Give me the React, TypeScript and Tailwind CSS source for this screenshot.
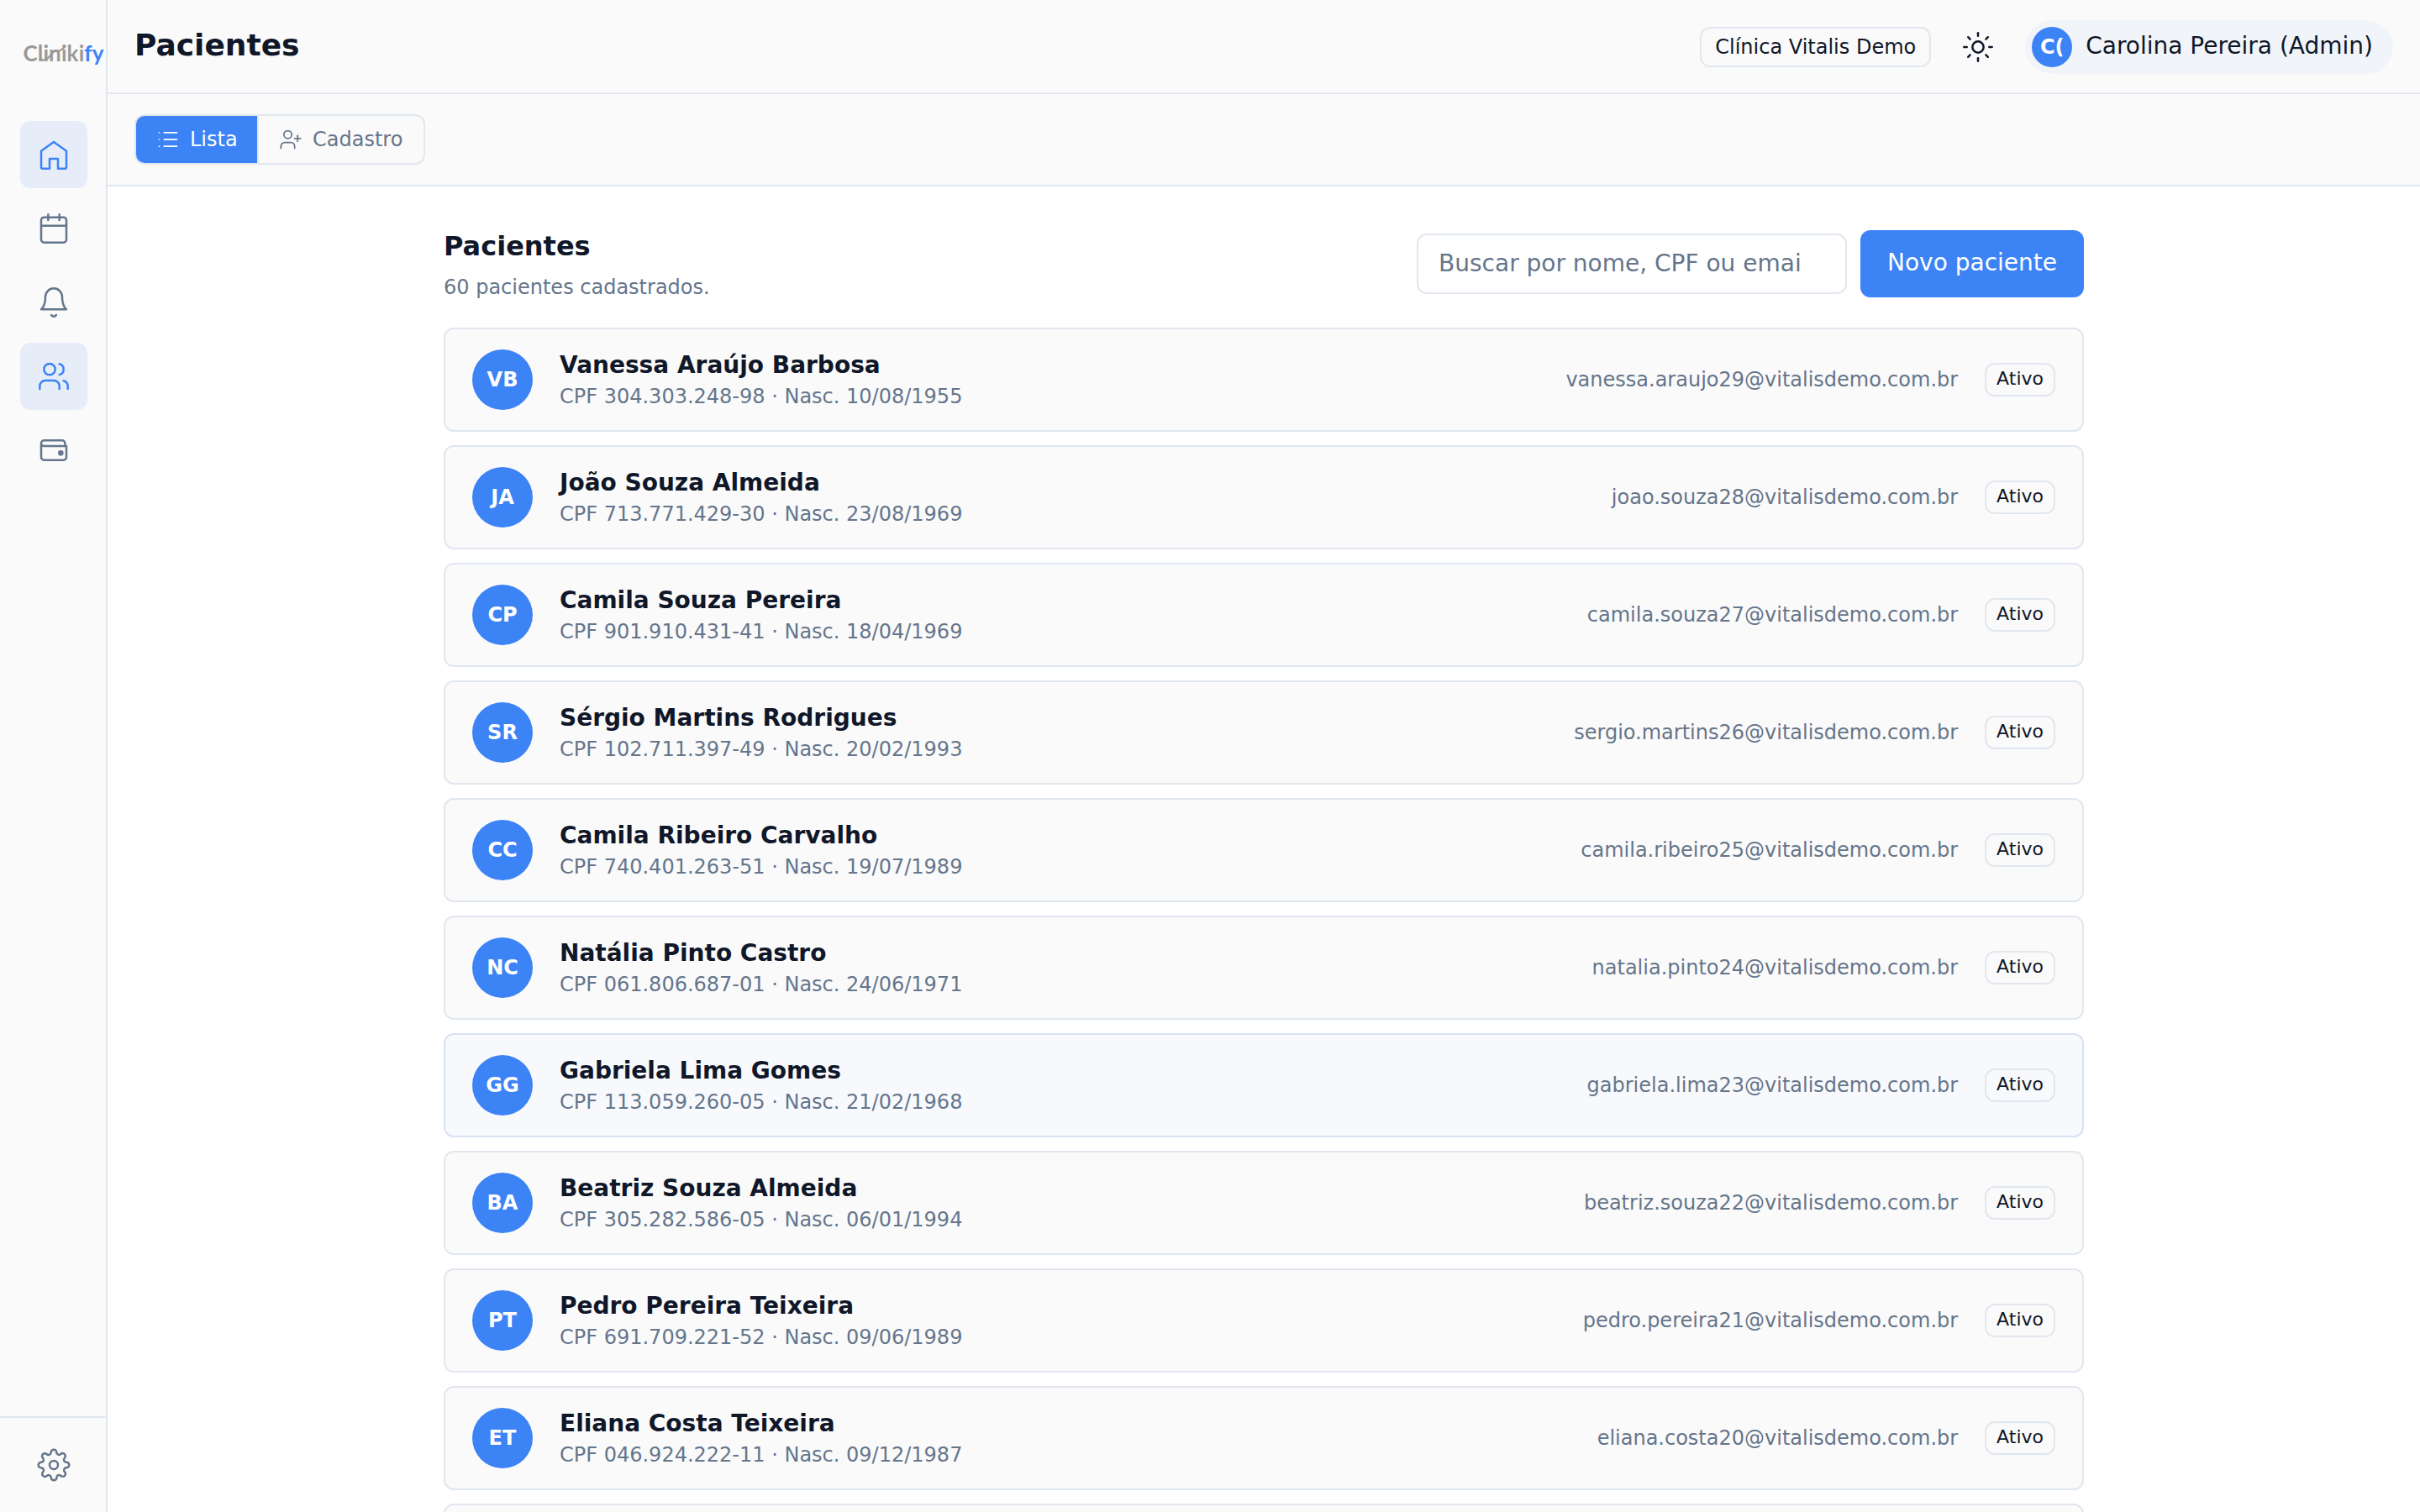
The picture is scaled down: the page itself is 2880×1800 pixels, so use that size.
import type { ReactNode } from "react";
import { List, Sun, UserPlus, Users } from "lucide-react";
import clsx from "clsx";

type Patient = {
  initials: string;
  name: string;
  cpf: string;
  birth: string;
  email: string;
};

const PATIENTS: Patient[] = [
  { initials: "VB", name: "Vanessa Araújo Barbosa", cpf: "304.303.248-98", birth: "10/08/1955", email: "vanessa.araujo29@vitalisdemo.com.br" },
  { initials: "JA", name: "João Souza Almeida", cpf: "713.771.429-30", birth: "23/08/1969", email: "joao.souza28@vitalisdemo.com.br" },
  { initials: "CP", name: "Camila Souza Pereira", cpf: "901.910.431-41", birth: "18/04/1969", email: "camila.souza27@vitalisdemo.com.br" },
  { initials: "SR", name: "Sérgio Martins Rodrigues", cpf: "102.711.397-49", birth: "20/02/1993", email: "sergio.martins26@vitalisdemo.com.br" },
  { initials: "CC", name: "Camila Ribeiro Carvalho", cpf: "740.401.263-51", birth: "19/07/1989", email: "camila.ribeiro25@vitalisdemo.com.br" },
  { initials: "NC", name: "Natália Pinto Castro", cpf: "061.806.687-01", birth: "24/06/1971", email: "natalia.pinto24@vitalisdemo.com.br" },
  { initials: "GG", name: "Gabriela Lima Gomes", cpf: "113.059.260-05", birth: "21/02/1968", email: "gabriela.lima23@vitalisdemo.com.br" },
  { initials: "BA", name: "Beatriz Souza Almeida", cpf: "305.282.586-05", birth: "06/01/1994", email: "beatriz.souza22@vitalisdemo.com.br" },
  { initials: "PT", name: "Pedro Pereira Teixeira", cpf: "691.709.221-52", birth: "09/06/1989", email: "pedro.pereira21@vitalisdemo.com.br" },
  { initials: "ET", name: "Eliana Costa Teixeira", cpf: "046.924.222-11", birth: "09/12/1987", email: "eliana.costa20@vitalisdemo.com.br" },
];

const HIGHLIGHTED = "GG";

function Icon({ children }: { children: ReactNode }) {
  return (
    <svg
      viewBox="0 0 24 24"
      className="size-10"
      fill="none"
      stroke="currentColor"
      strokeWidth={1.5}
      strokeLinecap="round"
      strokeLinejoin="round"
    >
      {children}
    </svg>
  );
}

const HomeIcon = () => (
  <Icon>
    <path d="M3 9.5 12 3l9 6.5V21a1 1 0 0 1-1 1h-5v-7H9v7H4a1 1 0 0 1-1-1z" />
  </Icon>
);

const CalendarIcon = () => (
  <Icon>
    <rect x="3" y="4" width="18" height="18" rx="2" />
    <path d="M16 2v4M8 2v4M3 10h18" />
  </Icon>
);

const BellIcon = () => (
  <Icon>
    <path d="M18 8A6 6 0 0 0 6 8c0 7-3 9-3 9h18s-3-2-3-9" />
    <path d="M13.73 21a2 2 0 0 1-3.46 0" />
  </Icon>
);

const WalletIcon = () => (
  <Icon>
    <path d="M3 7v10a2 2 0 0 0 2 2h14a2 2 0 0 0 2-2V9H5a2 2 0 0 1 0-4h13a2 2 0 0 1 2 2v2" />
    <circle cx="17" cy="14" r="1.25" fill="currentColor" />
  </Icon>
);

const SettingsIcon = () => (
  <Icon>
    <circle cx="12" cy="12" r="3" />
    <path d="M19.4 15a1.65 1.65 0 0 0 .33 1.82l.06.06a2 2 0 0 1 0 2.83 2 2 0 0 1-2.83 0l-.06-.06a1.65 1.65 0 0 0-1.82-.33 1.65 1.65 0 0 0-1 1.51V21a2 2 0 0 1-2 2 2 2 0 0 1-2-2v-.09A1.65 1.65 0 0 0 9 19.4a1.65 1.65 0 0 0-1.82.33l-.06.06a2 2 0 0 1-2.83 0 2 2 0 0 1 0-2.83l.06-.06a1.65 1.65 0 0 0 .33-1.82 1.65 1.65 0 0 0-1.51-1H3a2 2 0 0 1-2-2 2 2 0 0 1 2-2h.09A1.65 1.65 0 0 0 4.6 9a1.65 1.65 0 0 0-.33-1.82l-.06-.06a2 2 0 0 1 0-2.83 2 2 0 0 1 2.83 0l.06.06a1.65 1.65 0 0 0 1.82.33H9a1.65 1.65 0 0 0 1-1.51V3a2 2 0 0 1 2-2 2 2 0 0 1 2 2v.09a1.65 1.65 0 0 0 1 1.51 1.65 1.65 0 0 0 1.82-.33l.06-.06a2 2 0 0 1 2.83 0 2 2 0 0 1 0 2.83l-.06.06a1.65 1.65 0 0 0-.33 1.82V9a1.65 1.65 0 0 0 1.51 1H21a2 2 0 0 1 2 2 2 2 0 0 1-2 2h-.09a1.65 1.65 0 0 0-1.51 1z" />
  </Icon>
);

const NAV = [
  { id: "home", icon: <HomeIcon />, active: true },
  { id: "agenda", icon: <CalendarIcon />, active: false },
  { id: "alerts", icon: <BellIcon />, active: false },
  { id: "patients", icon: <Users size={40} strokeWidth={1.5} />, active: true },
  { id: "finance", icon: <WalletIcon />, active: false },
];

function Logo() {
  return (
    <svg viewBox="0 0 98 36" className="h-9 w-[98px] shrink-0">
      <text
        x="-0.5"
        y="24.5"
        fontSize="26"
        fontWeight="700"
        textLength="96"
        className="font-['Lato',sans-serif]"
      >
        <tspan fill="#999998">Cliniki</tspan>
        <tspan fill="#3c83f6">fy</tspan>
      </text>
      {/* pulse line running through the middle letters */}
      <path
        d="M20 19c0 5 4 6 8 3s7-10 12-9.500c4 .5 6-1.500 9.500-5.500"
        fill="none"
        stroke="#999998"
        strokeWidth="2.2"
        strokeLinecap="round"
      />
    </svg>
  );
}

function Sidebar() {
  return (
    <aside className="flex w-32 shrink-0 flex-col border-r-2 border-[#e1e7ef] bg-[#fafafa]">
      <div className="flex h-36 shrink-0 items-start pt-12 pl-7">
        <Logo />
      </div>
      <nav className="flex flex-1 flex-col gap-2 pl-6">
        {NAV.map(({ id, icon, active }) => (
          <button
            key={id}
            className={clsx(
              "flex size-20 items-center justify-center rounded-xl",
              active ? "bg-[#e6edf9] text-[#3c83f6]" : "text-[#65758b]"
            )}
          >
            {icon}
          </button>
        ))}
      </nav>
      <div className="border-t-2 border-[#e1e7ef] py-4 pl-6">
        <button className="flex size-20 items-center justify-center text-[#65758b]">
          <SettingsIcon />
        </button>
      </div>
    </aside>
  );
}

function Header() {
  return (
    <header className="flex h-28 shrink-0 items-center justify-between border-b-2 border-[#e1e7ef] bg-[#fafafa] px-8">
      <h1 className="pb-0.5 text-[36px] leading-[48px] font-bold">Pacientes</h1>
      <div className="flex items-center pt-0.5">
        <span className="flex h-12 items-center rounded-xl border-2 border-[#e1e7ef] px-4 text-2xl">
          Clínica Vitalis Demo
        </span>
        <button className="ml-9 flex">
          <Sun size={40} strokeWidth={1.5} />
        </button>
        <div className="ml-9 flex h-16 items-center gap-4 rounded-full bg-[#f1f5f9] pr-6 pl-2">
          <span className="flex size-12 items-center justify-center rounded-full bg-[#3c83f6] text-2xl font-bold text-white">
            C(
          </span>
          <span className="pb-0.5 text-[28px] leading-10">Carolina Pereira (Admin)</span>
        </div>
      </div>
    </header>
  );
}

function Tabs() {
  return (
    <div className="flex h-[110px] shrink-0 items-center border-b-2 border-[#e1e7ef] bg-[#fafafa] px-8">
      <div className="flex h-15 w-[346px] overflow-hidden rounded-xl border-2 border-[#e1e7ef] text-2xl">
        <button className="flex w-36 shrink-0 items-center gap-3 bg-[#3c83f6] pl-6 text-white">
          <List size={28} strokeWidth={1.5} />
          Lista
        </button>
        <button className="flex flex-1 items-center gap-3 border-l-2 border-[#e1e7ef] pl-6 text-[#65758b]">
          <UserPlus size={28} strokeWidth={1.5} />
          Cadastro
        </button>
      </div>
    </div>
  );
}

function PatientRow({ patient, highlighted }: { patient: Patient; highlighted: boolean }) {
  return (
    <li
      className={clsx(
        "flex h-31 shrink-0 items-center rounded-xl border-2 px-8",
        highlighted ? "border-[#d8e2f4] bg-[#f8f9fc]" : "border-[#e1e7ef] bg-[#fafafa]"
      )}
    >
      <span className="flex size-18 items-center justify-center rounded-full bg-[#3c83f6] text-2xl font-bold text-white">
        {patient.initials}
      </span>
      <div className="ml-8 flex-1">
        <p className="pt-0.5 text-[28px] leading-[38px] font-bold">{patient.name}</p>
        <p className="text-2xl leading-9 text-[#65758b]">
          CPF {patient.cpf} · Nasc. {patient.birth}
        </p>
      </div>
      <span className="text-2xl text-[#65758b]">{patient.email}</span>
      <span className="ml-8 flex h-10 items-center rounded-xl border-2 border-[#e1e7ef] px-3 pb-1 text-[22px]">
        Ativo
      </span>
    </li>
  );
}

export default function App() {
  return (
    <div className="flex h-[1800px] w-[2880px] overflow-hidden bg-white font-['DejaVu_Sans',sans-serif] text-[#0f1729]">
      <Sidebar />
      <div className="flex min-w-0 flex-1 flex-col">
        <Header />
        <Tabs />
        <main className="flex-1 overflow-hidden pt-12">
          <div className="mx-auto w-[1952px]">
            <div className="flex h-22 items-center justify-between">
              <div>
                <h2 className="text-[32px] leading-[46px] font-bold">Pacientes</h2>
                <p className="mt-2.5 text-2xl text-[#65758b]">60 pacientes cadastrados.</p>
              </div>
              <div className="flex items-center gap-4">
                <input
                  type="text"
                  placeholder="Buscar por nome, CPF ou emai"
                  className="h-18 w-[512px] rounded-xl border-2 border-[#e1e7ef] bg-white px-6 pb-0.5 text-[28px] placeholder:text-[#65758b]"
                />
                <button className="h-20 rounded-xl bg-[#3c83f6] px-8 pb-0.5 text-[28px] text-white">
                  Novo paciente
                </button>
              </div>
            </div>
            <ul className="mt-8 flex flex-col gap-4">
              {PATIENTS.map((patient) => (
                <PatientRow
                  key={patient.cpf}
                  patient={patient}
                  highlighted={patient.initials === HIGHLIGHTED}
                />
              ))}
              {/* top edge of the next card, cut by the fold */}
              <li className="h-31 shrink-0 rounded-xl border-2 border-[#e1e7ef] bg-[#fafafa]" />
            </ul>
          </div>
        </main>
      </div>
    </div>
  );
}
